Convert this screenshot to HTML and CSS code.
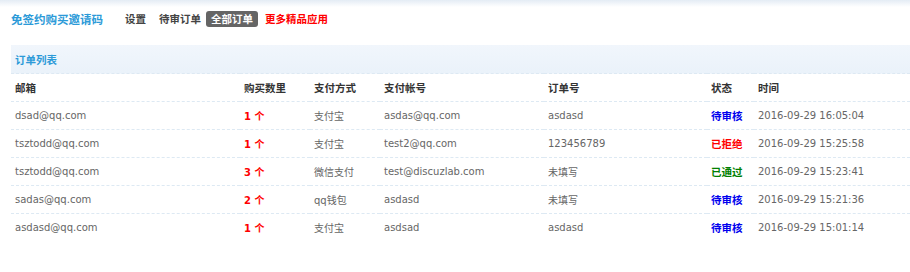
FILE: index.html
```html
<!DOCTYPE html>
<html lang="zh-CN">
<head>
<meta charset="utf-8">
<title>免签约购买邀请码</title>
<link rel="stylesheet" href="styles.css">
</head>
<body>
<div class="topbar"></div>
<div class="nav">
  <h3 class="title">免签约购买邀请码</h3>
  <ul class="tabs">
    <li><a>设置</a></li>
    <li><a>待审订单</a></li>
    <li class="current"><a>全部订单</a></li>
    <li class="more"><a>更多精品应用</a></li>
  </ul>
</div>
<div class="panel">
  <table class="tb">
    <colgroup>
      <col class="c1"><col class="c2"><col class="c3"><col class="c4"><col class="c5"><col class="c6"><col>
    </colgroup>
    <tr class="band"><th colspan="7">订单列表</th></tr>
    <tr class="head">
      <td>邮箱</td><td>购买数里</td><td>支付方式</td><td>支付帐号</td><td>订单号</td><td>状态</td><td>时间</td>
    </tr>
    <tr>
      <td>dsad@qq.com</td><td class="num">1 个</td><td>支付宝</td><td>asdas@qq.com</td><td>asdasd</td><td class="st wait">待审核</td><td>2016-09-29 16:05:04</td>
    </tr>
    <tr>
      <td>tsztodd@qq.com</td><td class="num">1 个</td><td>支付宝</td><td>test2@qq.com</td><td>123456789</td><td class="st deny">已拒绝</td><td>2016-09-29 15:25:58</td>
    </tr>
    <tr>
      <td>tsztodd@qq.com</td><td class="num">3 个</td><td>微信支付</td><td>test@discuzlab.com</td><td>未填写</td><td class="st pass">已通过</td><td>2016-09-29 15:23:41</td>
    </tr>
    <tr>
      <td>sadas@qq.com</td><td class="num">2 个</td><td>qq钱包</td><td>asdasd</td><td>未填写</td><td class="st wait">待审核</td><td>2016-09-29 15:21:36</td>
    </tr>
    <tr class="last">
      <td>asdasd@qq.com</td><td class="num">1 个</td><td>支付宝</td><td>asdsad</td><td>asdasd</td><td class="st wait">待审核</td><td>2016-09-29 15:01:14</td>
    </tr>
  </table>
</div>
</body>
</html>
```

FILE: styles.css
```css
html, body {
  margin: 0;
  padding: 0;
  background: #fff;
}
body {
  font-family: "DejaVu Sans", "Noto Sans CJK SC", sans-serif;
  font-size: 10px;
  color: #666;
}
.topbar {
  height: 7px;
  background: linear-gradient(#e4ecf5, #fff);
}
.nav {
  display: flex;
  align-items: center;
  height: 24px;
  padding-left: 11px;
}
.title {
  margin: 0;
  font-family: "Noto Sans CJK SC", sans-serif;
  font-size: 11.5px;
  font-weight: 700;
  color: #2c9ad8;
}
.tabs {
  display: flex;
  align-items: center;
  list-style: none;
  margin: 0 0 0 17px;
  padding: 0;
}
.tabs a {
  display: block;
  padding: 0 5px;
  height: 16px;
  line-height: 16px;
  font-family: "Noto Sans CJK SC", sans-serif;
  font-size: 10.5px;
  font-weight: 700;
  color: #444;
  border-radius: 3px;
}
.tabs li:first-child { margin-right: 3px; }
.tabs li:nth-child(2) { margin-right: 0; }
.tabs li.current { margin-right: 2px; }
.tabs .current a {
  background: #656565;
  color: #fff;
}
.tabs .more a {
  color: #f00;
}
.panel {
  margin: 14px 0 0 11px;
}
.tb {
  width: 100%;
  border-collapse: collapse;
  table-layout: fixed;
}
.c1 { width: 229px; }
.c2 { width: 70px; }
.c3 { width: 70px; }
.c4 { width: 164px; }
.c5 { width: 163px; }
.c6 { width: 47px; }
.tb td, .tb th {
  padding: 0 0 0 4px;
  height: 27px;
  text-align: left;
  white-space: nowrap;
  border-bottom: 1px dashed #dde9f3;
  font-family: "DejaVu Sans", "Noto Sans CJK SC", sans-serif;
  font-size: 10px;
  color: #666;
}
.tb .band th {
  height: 28px;
  background: linear-gradient(#f1f6fc, #eaf2fa);
  font-family: "Noto Sans CJK SC", sans-serif;
  font-size: 10.5px;
  font-weight: 700;
  color: #2c9ad8;
}
.tb .head td {
  font-family: "Noto Sans CJK SC", sans-serif;
  font-size: 10.5px;
  font-weight: 700;
  color: #333;
}
.tb .last td {
  border-bottom: none;
}
.tb td.num {
  color: #f00;
  font-weight: 700;
}
.tb td.st {
  font-family: "Noto Sans CJK SC", sans-serif;
  font-size: 10.5px;
  font-weight: 700;
}
.tb td.wait { color: #0000ee; }
.tb td.deny { color: #f00; }
.tb td.pass { color: #008000; }
```
